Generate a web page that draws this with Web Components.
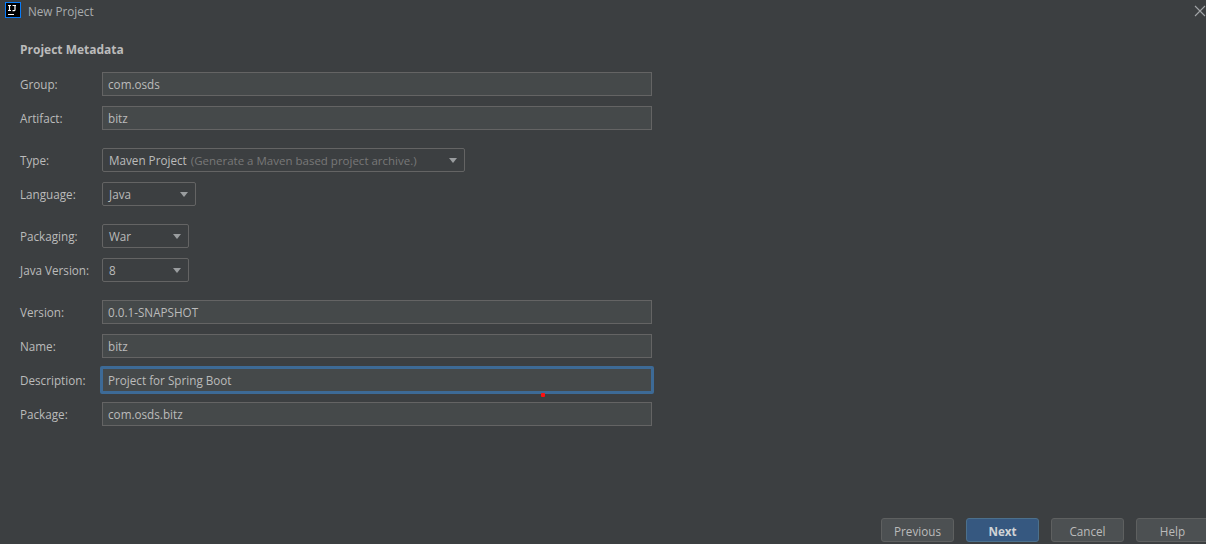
<!DOCTYPE html>
<html>
<head>
<meta charset="utf-8">
<title>New Project</title>
<style>
html, body { margin: 0; height: 100%; background: #3c3f41; overflow: hidden; }
</style>
</head>
<body>
<new-project-dialog></new-project-dialog>

<script>
class TitleBar extends HTMLElement
{
    constructor() {
        super()
        const shadow = this.attachShadow({ mode: 'open' })
        shadow.innerHTML = `
        <style>
        :host {
            display: flex;
            align-items: center;
            height: 22px;
            padding-left: 5px;
            color: #a9acae;
        }
        .logo {
            width: 16px;
            height: 16px;
            margin-right: 7px;
            align-self: flex-start;
            margin-top: 2px;
            flex: none;
        }
        .title { flex: 1; }
        .close {
            width: 12px;
            height: 12px;
            flex: none;
        }
        </style>
        <svg class="logo" viewBox="0 0 16 16">
            <rect x="0.5" y="0.5" width="15" height="15" fill="#000" stroke="#087cfa"/>
            <path d="M3 3.5h3M4.5 3.5v5M3 8.5h3M7.5 3.5h3.5M10 3.5v4.2q0 1-1 1H7.5" stroke="#fff" stroke-width="1.2" fill="none"/>
            <rect x="3" y="12" width="6" height="1" fill="#fff"/>
        </svg>
        <span class="title"><slot></slot></span>
        <svg class="close" viewBox="0 0 12 12">
            <path d="M1 1l10 10M11 1L1 11" stroke="#a3a6a8" stroke-width="1.1" fill="none"/>
        </svg>
        `
    }
}

class FormRow extends HTMLElement
{
    constructor() {
        super()
        const shadow = this.attachShadow({ mode: 'open' })
        shadow.innerHTML = `
        <style>
        :host {
            display: flex;
            align-items: center;
            height: 24px;
        }
        label {
            width: 82px;
            flex: none;
            color: #bbbbbb;
        }
        </style>
        <label></label>
        <slot></slot>
        `
        this.labelElem = shadow.querySelector('label')
    }

    connectedCallback() {
        this.labelElem.textContent = this.getAttribute('label')
    }
}

class TextField extends HTMLElement
{
    constructor() {
        super()
        const shadow = this.attachShadow({ mode: 'open' })
        shadow.innerHTML = `
        <style>
        :host {
            display: flex;
            align-items: center;
            box-sizing: border-box;
            width: 550px;
            height: 24px;
            padding-left: 5px;
            background: #45494a;
            border: 1px solid #646464;
            color: #bbbbbb;
            position: relative;
        }
        :host([focused])::after {
            content: '';
            position: absolute;
            inset: -3px;
            border: 3px solid #3d6a96;
            border-radius: 2px;
        }
        </style>
        <slot></slot>
        `
    }
}

class ComboBox extends HTMLElement
{
    constructor() {
        super()
        const shadow = this.attachShadow({ mode: 'open' })
        shadow.innerHTML = `
        <style>
        :host {
            display: flex;
            align-items: center;
            justify-content: space-between;
            box-sizing: border-box;
            height: 24px;
            padding: 0 7px 0 6px;
            background: #3c3f41;
            border: 1px solid #646464;
            border-radius: 2px;
            color: #bbbbbb;
            white-space: nowrap;
        }
        .arrow {
            width: 0;
            height: 0;
            border-left: 4.5px solid transparent;
            border-right: 4.5px solid transparent;
            border-top: 5px solid #9a9d9f;
        }
        </style>
        <span><slot></slot></span>
        <span class="arrow"></span>
        `
    }
}

class DialogButton extends HTMLElement
{
    constructor() {
        super()
        const shadow = this.attachShadow({ mode: 'open' })
        shadow.innerHTML = `
        <style>
        :host {
            display: flex;
            align-items: center;
            justify-content: center;
            box-sizing: border-box;
            width: 73px;
            height: 24px;
            padding-top: 1px;
            flex: none;
            background: #4c5052;
            border: 1px solid #5e6060;
            border-radius: 3px;
            color: #bbbbbb;
        }
        :host([primary]) {
            background: #365880;
            border-color: #4c708c;
            color: #d0d3d6;
            font-weight: 700;
        }
        </style>
        <slot></slot>
        `
    }
}

class NewProjectDialog extends HTMLElement
{
    constructor() {
        super()
        const shadow = this.attachShadow({ mode: 'open' })
        shadow.innerHTML = `
        <style>
        :host {
            display: flex;
            flex-direction: column;
            height: 544px;
            overflow: hidden;
            background: #3c3f41;
            font: 11.7px "Open Sans", "Noto Sans", sans-serif;
            color: #bbbbbb;
            position: relative;
        }
        .content {
            flex: 1;
            padding: 20px 20px 0;
        }
        h1 {
            margin: 0 0 14px;
            height: 16px;
            line-height: 16px;
            font-size: 12px;
            font-weight: 700;
        }
        .group {
            display: flex;
            flex-direction: column;
            gap: 10px;
            margin-bottom: 18px;
        }
        .type { width: 363px; }
        .lang { width: 94px; }
        .pack { width: 87px; }
        .hint { color: #787878; font-size: 11.5px; margin-left: 1px; }
        .footer {
            display: flex;
            justify-content: flex-end;
            gap: 12px;
            margin-right: -3px;
            padding-bottom: 2px;
        }
        .dot {
            position: absolute;
            left: 541px;
            top: 393px;
            width: 4px;
            height: 4px;
            border-radius: 1px;
            background: #ff0f0f;
        }
        </style>
        <title-bar>New Project</title-bar>
        <div class="content">
            <h1>Project Metadata</h1>
            <div class="group">
                <form-row label="Group:"><text-field>com.osds</text-field></form-row>
                <form-row label="Artifact:"><text-field>bitz</text-field></form-row>
            </div>
            <div class="group">
                <form-row label="Type:"><combo-box class="type"><span>Maven Project&nbsp;<span class="hint">(Generate a Maven based project archive.)</span></span></combo-box></form-row>
                <form-row label="Language:"><combo-box class="lang">Java</combo-box></form-row>
            </div>
            <div class="group">
                <form-row label="Packaging:"><combo-box class="pack">War</combo-box></form-row>
                <form-row label="Java Version:"><combo-box class="pack">8</combo-box></form-row>
            </div>
            <div class="group">
                <form-row label="Version:"><text-field>0.0.1-SNAPSHOT</text-field></form-row>
                <form-row label="Name:"><text-field>bitz</text-field></form-row>
                <form-row label="Description:"><text-field focused>Project for Spring Boot</text-field></form-row>
                <form-row label="Package:"><text-field>com.osds.bitz</text-field></form-row>
            </div>
        </div>
        <div class="footer">
            <dialog-button>Previous</dialog-button>
            <dialog-button primary>Next</dialog-button>
            <dialog-button>Cancel</dialog-button>
            <dialog-button>Help</dialog-button>
        </div>
        <div class="dot"></div>
        `
    }
}

customElements.define('title-bar', TitleBar)
customElements.define('form-row', FormRow)
customElements.define('text-field', TextField)
customElements.define('combo-box', ComboBox)
customElements.define('dialog-button', DialogButton)
customElements.define('new-project-dialog', NewProjectDialog)
</script>
</body>
</html>
